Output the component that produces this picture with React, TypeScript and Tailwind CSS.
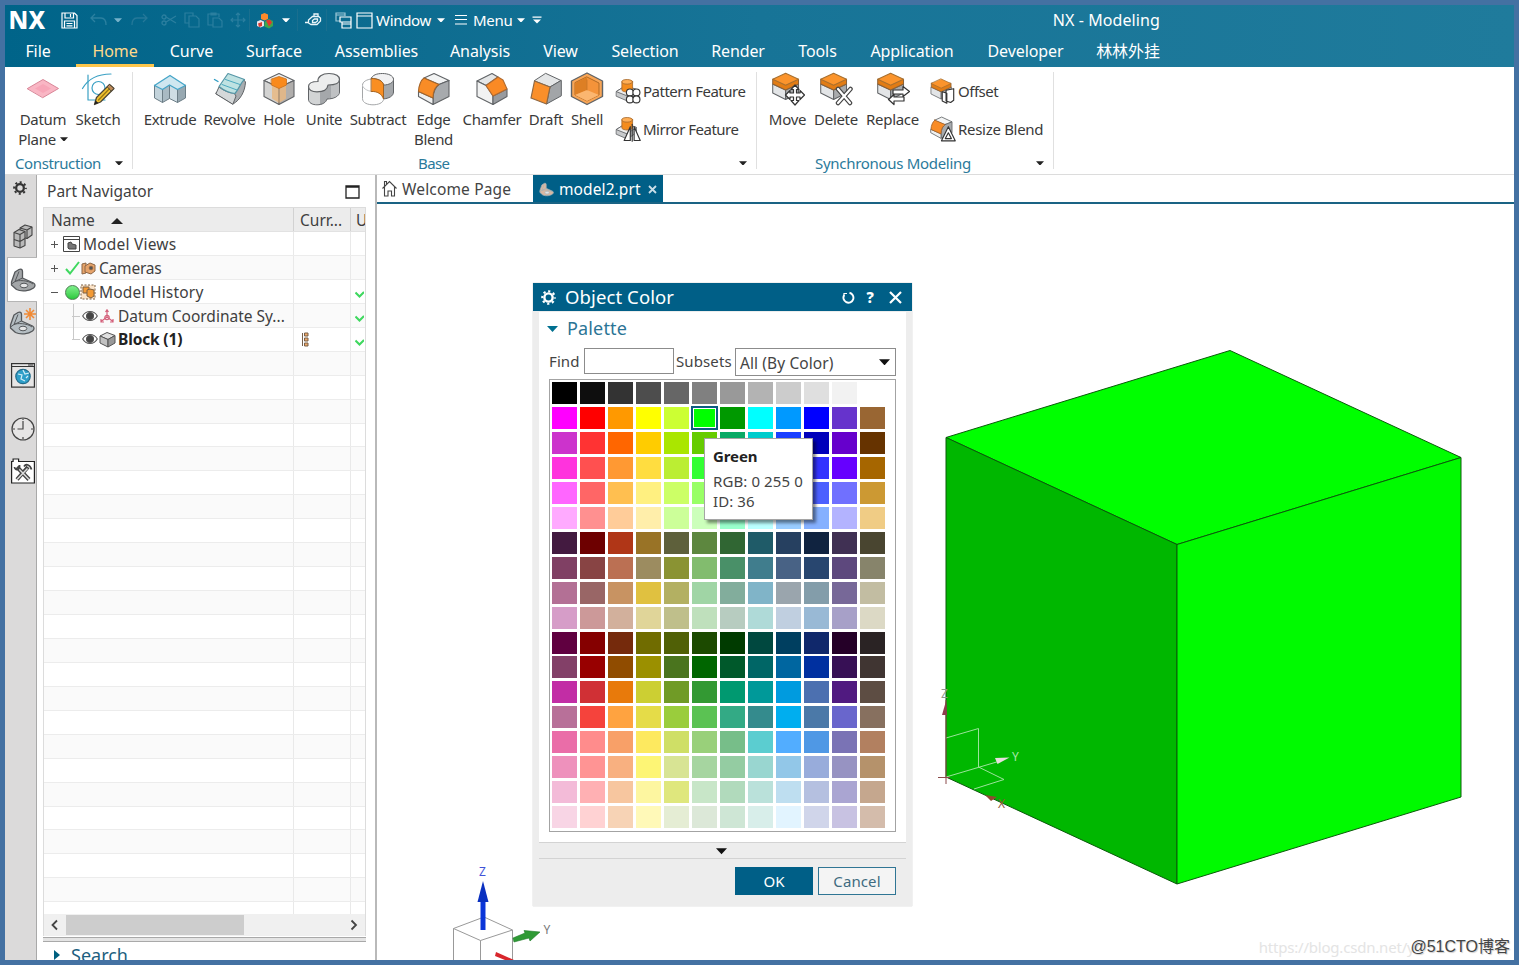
import React from "react";

type Kids = { children?: React.ReactNode };

const palette: string[][] = [
  ["#000000", "#0e0e0e", "#333333", "#4d4d4d", "#666666", "#808080", "#999999", "#b3b3b3", "#cccccc", "#dfdfdf", "#f2f2f2", "#ffffff"],
  ["#ff00ff", "#ff0000", "#ff9900", "#ffff00", "#ccff33", "#00ff00", "#009900", "#00ffff", "#0099ff", "#0000ff", "#6633cc", "#996633"],
  ["#cc33cc", "#ff3333", "#ff6600", "#ffcc00", "#aae600", "#66cc00", "#0aaa66", "#00cccc", "#1a40ff", "#0000bb", "#6600cc", "#663300"],
  ["#ff33dd", "#ff5050", "#ff9933", "#ffdd40", "#bbee33", "#33ff33", "#33cc88", "#33dddd", "#3366ff", "#3333ff", "#6600ff", "#a66600"],
  ["#ff66ff", "#ff6666", "#ffbf50", "#fff080", "#ccff66", "#99ff66", "#66ddaa", "#66ffee", "#6699ff", "#4c60ff", "#7070ff", "#cc9933"],
  ["#ffaaff", "#ff9090", "#ffcc99", "#ffeeaa", "#ccff99", "#ccffbb", "#99ffcc", "#bbffff", "#99ccff", "#85b0ff", "#b3b3ff", "#f0cc85"],
  ["#431a40", "#6d0000", "#b03617", "#997326", "#5e603b", "#5d873f", "#306633", "#1f5b68", "#264060", "#102340", "#403053", "#494530"],
  ["#804064", "#884444", "#bb7053", "#9c8c60", "#8a9333", "#82bc6e", "#499068", "#407d8d", "#486285", "#28466f", "#5d487d", "#87846b"],
  ["#b37095", "#996666", "#c89362", "#e0c140", "#b3b062", "#a0d5a5", "#82ad9c", "#80b4c8", "#9aa5ad", "#839daa", "#776898", "#c2bda2"],
  ["#d69dc8", "#cc9999", "#d2b09c", "#e0d599", "#bfbf8b", "#bfe0bc", "#b7ccc0", "#afdad8", "#c0cfe0", "#99b9d5", "#a7a0c8", "#dcd9c5"],
  ["#600040", "#850000", "#752a0c", "#706c00", "#506006", "#1c4a00", "#003b00", "#00483f", "#003f60", "#10286b", "#250028", "#2a2324"],
  ["#834068", "#980000", "#904c00", "#9b9000", "#4a741e", "#006600", "#00592b", "#006666", "#0066a0", "#0030a0", "#371055", "#403532"],
  ["#c22da5", "#d03035", "#e87a0b", "#cccf33", "#709b26", "#339933", "#009970", "#009999", "#009bdf", "#4c70b0", "#501a80", "#5d4d43"],
  ["#b87099", "#f5433c", "#ffa340", "#e5dc48", "#9acd3c", "#5bc253", "#33aa85", "#348b8d", "#00aeef", "#4b79a8", "#6966cc", "#87705f"],
  ["#ea6da8", "#ff8c8c", "#f8a068", "#fde95f", "#cfdf66", "#99d07a", "#77be89", "#5bcdd0", "#52adff", "#4f98e5", "#7a73b5", "#b28060"],
  ["#ee91bc", "#ff9494", "#f8b080", "#fdf575", "#d8e494", "#a6d5a0", "#94cca2", "#99d6d0", "#92c7e8", "#98acdb", "#9793c2", "#b5926b"],
  ["#f3bbd8", "#ffb0b3", "#f7c69f", "#fdf6a0", "#dfe77d", "#c8e6c8", "#b1dabc", "#bae1da", "#bedef0", "#b5c0e0", "#aaa5d2", "#c5a78e"],
  ["#f8d5e5", "#ffd2d3", "#f7d3b5", "#fff9b8", "#e5edd4", "#dce8d8", "#cee6d5", "#d8eeea", "#e2f4ff", "#d0d5ea", "#c8c2e2", "#d4bcab"],
];

/* ---------- small building blocks ---------- */

function Caret({ className = "", size = 8 }: { className?: string; size?: number }) {
  return (
    <svg width={size} height={size * 0.6} viewBox="0 0 10 6" className={`shrink-0 ${className}`}>
      <path d="M0 .3h10L5 5.800z" fill="currentColor" />
    </svg>
  );
}

function Icon({ children, size = 34 }: Kids & { size?: number }) {
  return (
    <svg width={size} height={size} viewBox="0 0 34 34" className="shrink-0" strokeLinejoin="round" strokeLinecap="round">
      {children}
    </svg>
  );
}

const ink = "#606366";

function Box({ top = "#f0f1f2", left = "#d6d8da", right = "#989ba0" }: { top?: string; left?: string; right?: string }) {
  return (
    <g stroke={ink} strokeWidth="1.1">
      <path d="M17 1.500 32 8.500 17 15.500 2 8.500z" fill={top} />
      <path d="M2 8.500 17 15.500V32.500L2 24.500z" fill={left} />
      <path d="M32 8.500 17 15.500V32.500l15-8z" fill={right} />
    </g>
  );
}

const DatumIcon = () => (
  <Icon>
    <path d="M1.500 16.500 17 7.500l15.500 9L17 25.500z" fill="#f9b6c4" stroke="#d98698" />
    <path d="M9 16.500l8-4.500 8 4.500-8 4.500z" fill="#f7a6b8" stroke="none" />
  </Icon>
);
const SketchIcon = () => (
  <Icon>
    <g fill="none" stroke="#3ba1c4" strokeWidth="1.200">
      <path d="M7 3v25h17" />
      <path d="M1.500 16.500C7 7 16 2 30 2" />
      <circle cx="17.500" cy="16" r="6.500" />
    </g>
    <path d="M13.500 32.500 15.500 25.500 28.500 12.500 33 16.500 19.500 30z" fill="#f2c230" stroke="#4d4637" strokeWidth="1.300" />
    <path d="M17.500 28 30.500 14.500" stroke="#9a7812" strokeWidth="1.300" />
    <path d="M26.500 14.500 28.500 12.500 33 16.500 30.500 18.800z" fill="#bf8a5a" stroke="#4d4637" />
    <path d="M13.500 32.500 14.500 28.500 17.500 31z" fill="#222" />
  </Icon>
);
const ExtrudeIcon = () => (
  <Icon>
    <g stroke="#6d7e87" strokeWidth="1">
      <path d="M1.500 13.500V26L9.500 30.500V17.500z" fill="#c3d3db" />
      <path d="M9.500 17.500V30.500L16.500 26.500V13z" fill="#a9bac3" />
      <path d="M16.500 13V26.500L24.500 30.500V17.500z" fill="#cfdde4" />
      <path d="M24.500 17.500V30.500L32.500 26V13.500z" fill="#97a8b1" />
    </g>
    <path d="M1.500 13.500 17 3.500 32.500 13.500 24.500 17.500 16.500 13 9.500 17.500z" fill="#cfe7f0" stroke="#46a5c8" strokeWidth="1.300" />
  </Icon>
);
const RevolveIcon = () => (
  <Icon>
    <path d="M3 21.500 20 32C27 28 32 20 32.500 10L30 7 18 22z" fill="#a9adb0" stroke={ink} />
    <path d="M3 21.500 6 15C11 19 17 21 21 21L23 24 20 32z" fill="#d5d8d9" stroke={ink} />
    <path d="M6 14.500 15 1.500 31.500 7.500C28 10 26 17 22 21.500 16 21 11 18.500 6 14.500z" fill="#bfe2e2" stroke="#5596a6" strokeWidth="1.200" />
    <path d="M12.500 7.500 27 12.500M9 12.500l15 5.500" stroke="#4ba9bf" />
    <path d="M1.500 7.500 5 9.500" stroke="#2f9cc4" strokeWidth="1.400" />
  </Icon>
);
const HoleIcon = () => (
  <Icon>
    <Box left="#d3d3d2" right="#b0aeac" />
    <path d="M10 13V26.500L17 31l7-4.500V13z" fill="#e8b884" opacity=".85" />
    <path d="M17 15.500V32.500" stroke="#8a7b6c" strokeWidth=".8" />
    <path d="M9.500 7 17 4.500 24.500 7V13L17 16.500 9.500 13z" fill="#f98a1c" stroke="#c9701c" strokeWidth=".8" />
  </Icon>
);
const UniteIcon = () => (
  <Icon>
    <path d="M1.500 15V27C1.500 31 5.500 32.800 10 32.800 15.500 32.800 19 30.500 20 27 27 27 32.500 24 32.500 20V7z" fill="#a5a8ab" stroke={ink} />
    <path d="M2 16V27C2 30.500 6 32.300 10 32.300L13 32V18z" fill="#d2d4d5" />
    <path d="M24 12V26C28 25.500 32 23.500 32 20V8z" fill="#bfc1c3" />
    <path d="M1.500 14.500C1.500 11 6 9.500 11 9.500 10.500 5 15 1.500 22 1.500S32.500 4 32.500 7.500 28 13 21 13C20.500 17.500 16 19.800 10 19.800 5 19.800 1.500 18 1.500 14.500z" fill="#eceded" stroke={ink} strokeWidth="1.200" />
  </Icon>
);
const SubtractIcon = () => (
  <Icon>
    <path d="M10.500 6V20L22 27C28 26.500 32.500 24 32.500 20V7z" fill="#a4a7aa" stroke={ink} />
    <path d="M10.500 6.500C11 3 16 1.500 21.500 1.500S32.500 3.500 32.500 7.500C32.500 10.500 28 13 22.500 13 22 9 17 6.500 10.500 6.500z" fill="#f1f1f2" stroke={ink} />
    <path d="M1.500 13C1.500 9.500 6 7.500 10.500 7L22.500 20V27.500C22 31 17 32.800 12 32.800S1.500 31 1.500 27z" fill="#ffffff" stroke="#a5a7a9" />
    <path d="M1.500 13.500C2.500 17.500 8 19.500 12 19.500" fill="none" stroke="#c3c5c7" />
    <path d="M10.500 6.500C17 6.500 22 9 22.500 13V27C21 22 16 19 10.500 19.500z" fill="#f98e22" stroke="#a26220" />
  </Icon>
);
const BlendShape = () => (
  <>
    <path d="M7 6 17 1.500 32 8.500 22 12.500z" fill="#f3f4f4" />
    <path d="M22 12.500 32 8.500V24.500L16 32.500V26C16.500 19 18.500 15 22 12.500z" fill="#a7aaad" />
    <path d="M1.500 19.500 16 26V32.500L1.500 24.500z" fill="#eff0f0" />
    <path d="M7 6 22 12.500C18.500 14.500 16 19 16 26L1.500 19.500C1.500 14 4 8 7 6z" fill="#f98c26" stroke="#a3642a" />
  </>
);
const EdgeIcon = () => (
  <Icon>
    <g stroke={ink} strokeWidth="1.100"><BlendShape /></g>
  </Icon>
);
const ChamferIcon = () => (
  <Icon>
    <g stroke={ink} strokeWidth="1.100">
      <path d="M2 9 17 1.500 23 5 11 13.500z" fill="#e4e6e7" />
      <path d="M2 9 11 13.500 18 24V32.500L2 24.500z" fill="#f1f2f2" />
      <path d="M18 24 32 17V24.500L18 32.500z" fill="#989b9f" />
      <path d="M23 5 28 8 32 17 18 24 11 13.500z" fill="#fa8a25" stroke="#b06a30" />
    </g>
  </Icon>
);
const DraftIcon = () => (
  <Icon>
    <path d="M17 1.500 32 8.500 21 15 5.500 9z" fill="#e4e6e7" stroke={ink} />
    <path d="M32 8.500 21 15 17.500 32 32 24z" fill="#a2a5a8" stroke={ink} />
    <path d="M5.500 9 21 15 17.500 32 2 26z" fill="#fa8f2a" stroke="#8e6844" strokeWidth="1.200" />
  </Icon>
);
const ShellIcon = () => (
  <Icon>
    <path d="M17 1 32.500 9V24.500L17 32.500 1.500 24.500V9z" fill="#f8a556" stroke={ink} strokeWidth="1.400" />
    <path d="M17 5 29 11V23L17 29 5 23V11z" fill="#f4933a" stroke="#b16a25" />
    <path d="M17 5V18L5 23V11z" fill="#dd7f24" />
    <path d="M17 18 29 23 17 29 5 23z" fill="#fbb670" />
    <path d="M17 18V8" stroke="#c8762a" strokeWidth=".8" />
  </Icon>
);
const SyncBox = () => (
  <g transform="scale(.86)" stroke={ink} strokeWidth="1.200">
    <path d="M2 14 17 21V32L2 24.500z" fill="#e3e5e7" />
    <path d="M32 14 17 21V32l15-7.500z" fill="#a9abad" />
    <path d="M2 8.500V14L17 21 32 14V8.500z" fill="#e27c14" stroke="#8c6238" />
    <path d="M17 1.500 32 8.500 17 15.500 2 8.500z" fill="#fb942c" stroke="#a8702f" />
  </g>
);
const MoveIcon = () => (
  <Icon>
    <SyncBox />
    <path d="M24 13l4 4.500h-2.500v3.500h3.500V18.500l4.500 4.500-4.500 4.500V25h-3.500v3.500H28L24 33l-4-4.500h2.500V25H19v2.500L14.500 23l4.500-4.500V21h3.500v-3.500H20z" fill="#fff" stroke="#333" strokeWidth="1.200" />
  </Icon>
);
const DeleteIcon = () => (
  <Icon>
    <SyncBox />
    <path d="M19 17 31 31M31.500 17 19 31" stroke="#444" strokeWidth="4.500" />
    <path d="M19 17 31 31M31.500 17 19 31" stroke="#fff" strokeWidth="2.200" />
  </Icon>
);
const ReplaceIcon = () => (
  <Icon>
    <SyncBox />
    <path d="M17 18h10v-3.500l6.500 5-6.500 5V22H17zM28 25H18v-2.500L12.500 27.500l5.500 5V29h10z" fill="#fff" stroke="#333" strokeWidth="1.200" />
  </Icon>
);
const Boss = () => (
  <g stroke={ink} strokeWidth="1.100">
    <path d="M2 17.500 14 10l14 5v7L16 30 2 24z" fill="#c8cacc" />
    <path d="M2 17.500 14 10l14 5-12 8z" fill="#ececec" />
    <path d="M9 5V16c2 3 12 3 14 0V5z" fill="#f48c1d" stroke="#a86a2c" />
    <ellipse cx="16" cy="5" rx="7" ry="3" fill="#ffae55" stroke="#a86a2c" />
  </g>
);
const PatternIcon = () => (
  <Icon size={26}>
    <Boss />
    <g fill="#fff" stroke="#333" strokeWidth="1.500">
      <circle cx="19.500" cy="19" r="4.600" /><circle cx="28" cy="19" r="4.600" />
      <circle cx="19.500" cy="28" r="4.600" /><circle cx="28" cy="28" r="4.600" />
    </g>
  </Icon>
);
const MirrorIcon = () => (
  <Icon size={26}>
    <Boss />
    <path d="M20 14V32H12zM25 14V32h8z" fill="#fff" stroke="#333" strokeWidth="1.500" />
    <path d="M22.500 11V33" stroke="#333" strokeWidth="1.500" />
  </Icon>
);
const OffsetIcon = () => (
  <Icon size={26}>
    <SyncBox />
    <path d="M16 18v12l6 3V20zM21 16l10-2v15l-4 3-6-2z" fill="#fff" stroke="#333" strokeWidth="1.500" />
  </Icon>
);
const ResizeIcon = () => (
  <Icon size={26}>
    <g transform="scale(.9)" stroke={ink} strokeWidth="1.200"><BlendShape /></g>
    <path d="M24 14 33 32.500H15zM24 22l4 7.500h-8z" fill="#fff" stroke="#333" strokeWidth="1.500" />
  </Icon>
);

function Part({ size = 26, fill = "#a3a6a8", line = "#55585b" }: { size?: number; fill?: string; line?: string }) {
  return (
    <svg width={size} height={size} viewBox="0 0 26 26" className="shrink-0" strokeLinejoin="round">
      <path d="M1.500 15 5 5 9 2.500c2-1 3.500 0 3.500 2V11l11 5c2 1 2 3 0 5-4 3-12 4-17 1.500L1.500 18z" fill={fill} stroke={line} strokeWidth="1.300" />
      <path d="M5 14.500 9 4.500M12.500 11 5 14.500 1.500 17M5 14.500C8 13 18 13 23 17" fill="none" stroke={line} />
      <ellipse cx="14" cy="18.500" rx="3.800" ry="2.300" fill="#e4e5e6" stroke={line} />
    </svg>
  );
}

function Gear({ className = "", size = 14 }: { className?: string; size?: number }) {
  return (
    <svg width={size} height={size} viewBox="0 0 16 16" className={`shrink-0 ${className}`} fill="none" stroke="currentColor">
      <circle cx="8" cy="8" r="4.400" strokeWidth="2.600" />
      <circle cx="8" cy="8" r="6.700" strokeWidth="2.200" strokeDasharray="2.400 2.860" strokeDashoffset="1.200" />
    </svg>
  );
}

/* ---------- header ---------- */

const Cell = ({ w, children }: Kids & { w: string }) => <div className={`flex h-full shrink-0 items-center justify-center ${w}`}>{children}</div>;

function QuickBar() {
  return (
    <div className="flex h-[30px] items-center text-[15px] text-white">
      <Cell w="w-[44px]"><span className="text-[24px] font-extrabold tracking-[0.4px]">NX</span></Cell>
      <Cell w="w-[40px]">
        <svg width="17" height="17" viewBox="0 0 17 17" fill="none" stroke="#fff" strokeWidth="1.200">
          <path d="M1 1h12.500L16 3.500V16H1zM4 1v5h8.500V1M9.500 2v3M3.500 16V9h10v7M5.500 11.500h6M5.500 13.800h6" />
        </svg>
      </Cell>
      <Cell w="w-[19px]"><svg width="17" height="14" viewBox="0 0 17 14" fill="none" stroke="#2b80a0" strokeWidth="1.300"><path d="M5 1 1 5l4 4M1 5h10c4 0 5 3 5 7" /></svg></Cell>
      <Cell w="w-[20px]"><Caret className="text-[#76b2ca]" /></Cell>
      <Cell w="w-[22px]"><svg width="17" height="14" viewBox="0 0 17 14" fill="none" stroke="#247899" strokeWidth="1.300"><path d="M12 1l4 4-4 4M16 5H6C2 5 1 8 1 12" /></svg></Cell>
      <div className="ml-[7px] flex h-full">
        <Cell w="w-[23px]"><svg width="16" height="14" viewBox="0 0 16 14" fill="none" stroke="#2b7f9f" strokeWidth="1.300"><path d="M15 3 5 9M15 10 5 4" /><circle cx="3" cy="4" r="2" /><circle cx="3" cy="10" r="2" /></svg></Cell>
        <Cell w="w-[23px]"><svg width="16" height="16" viewBox="0 0 16 16" fill="none" stroke="#2b7f9f" strokeWidth="1.200"><path d="M5 11H1V1h8v3M5 4h7l3 3v8H5z" /></svg></Cell>
        <Cell w="w-[23px]"><svg width="16" height="16" viewBox="0 0 16 16" fill="none" stroke="#2b7f9f" strokeWidth="1.200"><path d="M6 13H1V2h11v3M4 1h5v2H4zM6 6h6l3 3v6H6z" /></svg></Cell>
        <Cell w="w-[23px]"><svg width="16" height="16" viewBox="0 0 16 16" fill="none" stroke="#2b7f9f" strokeWidth="1.200"><path d="M8 1v14M1 8h14M6 3l2-2 2 2M6 13l2 2 2-2M3 6 1 8l2 2M13 6l2 2-2 2" /></svg></Cell>
      </div>
      <div className="mr-[4px] h-[22px] w-px bg-[#1a6f8f]" />
      <Cell w="w-[22px]">
        <svg width="18" height="17" viewBox="0 0 18 17">
          <path d="M5 2.500 8.500 1 12 2.500V7L8.500 8.500 5 7z" fill="#ff8a2a" />
          <path d="M1 9.500 4.500 8 8 9.500V14L4.500 15.500 1 14z" fill="#e9e3ea" />
          <path d="M2 11.500 6 10v4l-3 1z" fill="#d83a32" />
          <path d="M8.500 10 12.500 7 17 9v5l-4 2.500-4.500-2z" fill="#3fa64d" />
          <path d="M10 8.500l4-1 2 3-3 4z" fill="#e2382e" />
        </svg>
      </Cell>
      <Cell w="w-[19px]"><Caret /></Cell>
      <div className="mx-[2px] h-[22px] w-px bg-[#1a6f8f]" />
      <Cell w="w-[25px]">
        <svg width="18" height="14" viewBox="0 0 18 14" fill="none" stroke="#e9f5f9" strokeWidth="1.300">
          <path d="M1 9.500h3.500M4.500 7l4-3.500h6l2 1.500v3l-3.500 3.500H7L4.500 10zM8.500 7.500l2-1.500h3v2l-2 1.500h-3zM10 3.500V1h4v2.500" />
        </svg>
      </Cell>
      <div className="ml-px mr-[6px] h-[22px] w-px bg-[#1a6f8f]" />
      <Cell w="w-[20px]">
        <svg width="17" height="17" viewBox="0 0 17 17" fill="none" stroke="#fff" strokeWidth="1.200">
          <path d="M5 9H1V1h9v3M1 3h9" stroke="#9cc8d8" /><path d="M5 5h11v5H5zM7 10v6h9v-6M7 12h9" />
        </svg>
      </Cell>
      <Cell w="w-[23px]">
        <svg width="17" height="17" viewBox="0 0 17 17" fill="none" stroke="#fff" strokeWidth="1.200"><path d="M1 1h15v15H1zM1 4h15" /></svg>
      </Cell>
      <span className="w-[61px] tracking-[-0.3px]">Window</span>
      <Caret />
      <svg width="12" height="12" viewBox="0 0 12 12" className="ml-[10px] mr-[6px]" stroke="#fff" strokeWidth="1.200"><path d="M0 1.500h12M0 5.500h12M0 10h12" /></svg>
      <span className="w-[44px] tracking-[-0.3px]">Menu</span>
      <Caret />
      <svg width="10" height="8" viewBox="0 0 10 8" className="ml-[7px]" fill="#fff"><path d="M.5.500h9v1.300h-9zM1 3.500h8L5 7.500z" /></svg>
      <span className="ml-auto mr-[354px] text-[16px] tracking-[0.1px]">NX - Modeling</span>
    </div>
  );
}

function MenuTabs() {
  const tab = "flex h-full shrink-0 items-center justify-center";
  return (
    <div className="flex h-[32px] text-[16px] tracking-[-0.1px] text-white">
      <div className={`${tab} mr-[5px] w-[66px]`}>File</div>
      <div className={`${tab} w-[78px] border-b-[3px] border-[#fdc64b] pt-[3px] text-[#ffd98a]`}>Home</div>
      <div className={`${tab} w-[75px]`}>Curve</div>
      <div className={`${tab} w-[90px]`}>Surface</div>
      <div className={`${tab} w-[115px]`}>Assemblies</div>
      <div className={`${tab} w-[92px]`}>Analysis</div>
      <div className={`${tab} w-[69px]`}>View</div>
      <div className={`${tab} w-[100px]`}>Selection</div>
      <div className={`${tab} w-[86px]`}>Render</div>
      <div className={`${tab} w-[73px]`}>Tools</div>
      <div className={`${tab} w-[116px]`}>Application</div>
      <div className={`${tab} w-[111px]`}>Developer</div>
      <div className={`${tab} w-[94px]`}>林林外挂</div>
    </div>
  );
}

/* ---------- ribbon ---------- */

function Tool({ w, icon, children }: Kids & { w: string; icon: React.ReactNode }) {
  return (
    <div className={`flex shrink-0 flex-col items-center ${w}`}>
      {icon}
      <div className="mt-[3px] whitespace-nowrap text-center leading-[20px]">{children}</div>
    </div>
  );
}

const Side = ({ icon, children }: Kids & { icon: React.ReactNode }) => (
  <div className="flex h-[38px] items-center gap-[2px] whitespace-nowrap tracking-[-0.5px]">{icon}{children}</div>
);

function Group({ w, title, titleClass, children }: Kids & { w: string; title: string; titleClass: string }) {
  return (
    <div className={`flex shrink-0 flex-col ${w}`}>
      <div className="flex h-[81px]">{children}</div>
      <div className="flex h-[20px] items-center text-[#2b7a9b]">
        <span className={titleClass}>{title}</span>
        <Caret className="ml-auto mr-[9px] text-[#222]" />
      </div>
    </div>
  );
}

function Ribbon() {
  return (
    <div className="flex h-[108px] border-b border-[#dcdcdc] bg-white pt-[5px] text-[15px] tracking-[-0.3px] text-[#3a3a3a]">
      <Group w="w-[127px]" title="Construction" titleClass="ml-[10px] tracking-[-0.4px]">
        <div className="w-[10px]" />
        <Tool w="w-[56px]" icon={<DatumIcon />}>Datum<br /><span className="inline-flex items-center gap-[4px]">Plane <Caret className="text-[#222]" /></span></Tool>
        <Tool w="w-[54px]" icon={<SketchIcon />}>Sketch</Tool>
      </Group>
      <div className="h-[97px] w-px bg-[#e0e0e0]" />
      <Group w="w-[623px]" title="Base" titleClass="ml-[285px] tracking-[-0.6px]">
        <div className="w-[8px]" />
        <Tool w="w-[58px]" icon={<ExtrudeIcon />}>Extrude</Tool>
        <Tool w="w-[61px]" icon={<RevolveIcon />}>Revolve</Tool>
        <Tool w="w-[38px]" icon={<HoleIcon />}>Hole</Tool>
        <Tool w="w-[52px]" icon={<UniteIcon />}>Unite</Tool>
        <Tool w="w-[56px]" icon={<SubtractIcon />}>Subtract</Tool>
        <Tool w="w-[55px]" icon={<EdgeIcon />}>Edge<br />Blend</Tool>
        <Tool w="w-[62px]" icon={<ChamferIcon />}>Chamfer</Tool>
        <Tool w="w-[46px]" icon={<DraftIcon />}>Draft</Tool>
        <Tool w="w-[36px]" icon={<ShellIcon />}>Shell</Tool>
        <div className="ml-[10px]">
          <Side icon={<PatternIcon />}>Pattern Feature</Side>
          <Side icon={<MirrorIcon />}>Mirror Feature</Side>
        </div>
      </Group>
      <div className="h-[97px] w-px bg-[#e0e0e0]" />
      <Group w="w-[296px]" title="Synchronous Modeling" titleClass="ml-[58px]">
        <div className="w-[7px]" />
        <Tool w="w-[47px]" icon={<MoveIcon />}>Move</Tool>
        <Tool w="w-[50px]" icon={<DeleteIcon />}>Delete</Tool>
        <Tool w="w-[63px]" icon={<ReplaceIcon />}>Replace</Tool>
        <div className="ml-[6px]">
          <Side icon={<OffsetIcon />}>Offset</Side>
          <Side icon={<ResizeIcon />}><span className="tracking-[-0.3px]">Resize Blend</span></Side>
        </div>
      </Group>
      <div className="h-[97px] w-px bg-[#e0e0e0]" />
    </div>
  );
}

/* ---------- left resource bar ---------- */

function ResourceBar() {
  return (
    <div className="flex w-[32px] shrink-0 flex-col items-center border-r border-[#a9a9a9] bg-[#dbdada] pl-[2px]">
      <div className="flex h-[40px] w-full items-start justify-center pr-[4px] pt-[6px] text-[#333]"><Gear /></div>
      <div className="flex h-[42px] items-center pl-[2px]">
        <svg width="22" height="26" viewBox="0 0 22 26" fill="#b9b9b9" stroke="#444" strokeWidth="1.100" strokeLinejoin="round">
          <path d="M8 5 13 2l7 2v8l-5 3.500-7-2z" /><path d="M8 5 15 7V15.500M15 7 20 4" fill="none" />
          <path d="M2 9.500 7 6.500l6 2v14L8 25l-6-2z" /><path d="M2 9.500 8 11.500V25M8 11.500 13 8.500M2 16.500 8 18.500 13 15.500" fill="none" />
        </svg>
      </div>
      <div className="-mr-px flex h-[45px] w-[31px] items-center justify-center border-y border-l border-[#b5b5b5] bg-white"><Part /></div>
      <div className="relative mt-[7px] flex h-[28px] items-center">
        <Part fill="#b5bec3" />
        <svg width="12" height="12" viewBox="0 0 12 12" className="absolute -right-[1px] -top-[1px]" stroke="#f18a35" strokeWidth="1.600"><path d="M6 0v12M0 6h12M2 2l8 8M10 2l-8 8" /></svg>
      </div>
      <svg width="24" height="25" viewBox="0 0 24 25" className="ml-[2px] mt-[26px]" fill="none" stroke="#333" strokeWidth="1.200">
        <rect x=".6" y=".6" width="22.800" height="23.500" fill="#e7e6e6" /><path d="M.6 3.500h22.800M17 2h5" /><circle cx="12" cy="13.500" r="7.200" fill="#2e9fc9" stroke="#226b8b" /><path d="M7 11l4 1-1 4 4 2M12 7l2 4 4-1M15 15l2-2" stroke="#d2eef8" />
      </svg>
      <svg width="24" height="24" viewBox="0 0 24 24" className="ml-[2px] mt-[29px]" fill="none" stroke="#444" strokeWidth="1.200">
        <circle cx="12" cy="12" r="11" fill="#e6e5e5" /><path d="M12 4v8H6.500M12 20v2.500M1.500 12H4M20 12h2.500M12 1.500V3" />
      </svg>
      <svg width="24" height="26" viewBox="0 0 24 26" className="ml-[2px] mt-[17px]" fill="#fff" stroke="#222" strokeWidth="1.200">
        <path d="M.6 25V3.500h1.500V1h5.500v2.500h15.800V25z" />
        <path d="M6 9l12 12.500M17 9 6 21.500" stroke="#444" strokeWidth="4" /><path d="M7 10l11 11.500M16.500 10.500 6 21.500" stroke="#ddd" strokeWidth="1.500" />
        <path d="M3.500 9c.5 4 5.500 3 5-2M13 8.500c2-3 6-2 7.500 3" fill="none" stroke="#444" strokeWidth="1.800" />
      </svg>
    </div>
  );
}

/* ---------- part navigator ---------- */

const Check = () => (
  <svg width="9" height="8" viewBox="0 0 9 8" fill="none" stroke="#3fd85f" strokeWidth="2"><path d="M.5 2.500 4.500 6.500 9 2" /></svg>
);

const Eye = () => (
  <svg width="16" height="12" viewBox="0 0 16 12" className="shrink-0" fill="#fff" stroke="#555" strokeWidth="1.100">
    <path d="M.7 6C4 0 12 0 15.300 6 12 12 4 12 .7 6z" /><circle cx="8" cy="6" r="3.500" fill="#444" />
  </svg>
);

const Toggle = ({ open }: { open?: boolean }) => (
  <svg width="9" height="9" viewBox="0 0 9 9" className="shrink-0" stroke="#555"><path d={open ? "M1 4.500h7" : "M1 4.500h7M4.500 1v7"} /></svg>
);

function Row({ name, mid, last, shade }: { name?: React.ReactNode; mid?: React.ReactNode; last?: boolean; shade: boolean }) {
  return (
    <div className={`flex h-[23.950px] shrink-0 border-b border-[#ececec] ${shade ? "bg-[#fafafa]" : "bg-white"}`}>
      <div className="flex w-[250px] shrink-0 items-center whitespace-nowrap border-r border-[#e9e9e9]">{name}</div>
      <div className="flex w-[57px] shrink-0 items-center border-r border-[#e9e9e9] pl-[7px]">{mid}</div>
      <div className="flex items-end pb-[5px] pl-[4px]">{last && <Check />}</div>
    </div>
  );
}

function Navigator() {
  const rows: { name?: React.ReactNode; mid?: React.ReactNode; last?: boolean }[] = [
    {
      name: (
        <div className="flex items-center pl-[6px] pt-[2px]">
          <Toggle />
          <svg width="17" height="16" viewBox="0 0 17 16" className="ml-[4px] mr-[3px]" fill="#fff" stroke="#444"><path d="M.5.500h16v15H.5zM.5 3.500h16" /><path d="M5 12V7l3-1 1 2 4 1v4H6z" fill="#777" /></svg>
          <span className="tracking-[0.2px]">Model Views</span>
        </div>
      ),
    },
    {
      name: (
        <div className="flex items-center pl-[6px] pt-[2px]">
          <Toggle />
          <svg width="15" height="14" viewBox="0 0 15 14" className="ml-[6px]" fill="none" stroke="#3fd85f" strokeWidth="2"><path d="M1 8l4 4.500L14 1" /></svg>
          <svg width="15" height="15" viewBox="0 0 15 15" className="ml-[1px] mr-[3px]" fill="#e6a36a" stroke="#8c6646"><path d="M1 3 5 2v10l-4 1z" /><path d="M4 5l5-3 5 2v6l-4 3-6-2z" /><circle cx="10" cy="7" r="1.800" fill="#555" /></svg>
          <span className="tracking-[-0.2px]">Cameras</span>
        </div>
      ),
    },
    {
      last: true,
      name: (
        <div className="flex items-center pl-[6px] pt-[2px]">
          <Toggle open />
          <span className="ml-[6px] h-[15px] w-[15px] rounded-full border border-[#4d7d52] bg-linear-to-b from-[#7df08b] to-[#26c93c]" />
          <svg width="16" height="16" viewBox="0 0 16 16" className="mr-[3px]" fill="#f39a35" stroke="#7b6046"><path d="M1 1h14v14H1z" fill="#fbe3c8" strokeDasharray="2 1.500" /><path d="M3 3h6v6H3z" /><path d="M7 6l3-1 4 1v6l-3 2-4-2z" /></svg>
          <span className="tracking-[0.2px]">Model History</span>
        </div>
      ),
    },
    {
      last: true,
      name: (
        <div className="flex items-center pl-[28px] pt-[2px]">
          <span className="mr-[2px] h-px w-[8px] bg-[#c9c9c9]" />
          <Eye />
          <svg width="14" height="14" viewBox="0 0 14 14" className="ml-[2px] mr-[4px]" fill="none" stroke="#d4627c" strokeWidth="1.200"><path d="M7 8V1M7 8l-6 4.500M7 8l6 4.500M5.500 3 7 .8 8.500 3M1 10v3h3M10 13h3v-3" /><circle cx="7" cy="8.500" r="2.200" /></svg>
          Datum Coordinate Sy...
        </div>
      ),
    },
    {
      last: true,
      mid: (
        <svg width="10" height="15" viewBox="0 0 10 15" fill="#fff" stroke="#77604a"><path d="M1.500 1v13" /><path d="M3.500 1h3.500v3H3.500zM3.500 6h3.500v3H3.500zM3.500 11h3.500v3H3.500z" fill="#f0a868" /></svg>
      ),
      name: (
        <div className="flex items-center pl-[28px] font-bold tracking-[-0.150px] text-[#222]">
          <span className="mr-[2px] h-px w-[8px] bg-[#c9c9c9]" />
          <Eye />
          <svg width="17" height="17" viewBox="0 0 17 17" className="ml-[1px] mr-[2px]" stroke="#555" strokeLinejoin="round"><path d="M1 5 8 1.500 16 4.500 9 8.500z" fill="#e0e0e0" /><path d="M1 5l8 3.500V16L1 12z" fill="#c2c2c2" /><path d="M16 4.500 9 8.500V16l7-4z" fill="#999" /></svg>
          Block (1)
        </div>
      ),
    },
  ];
  while (rows.length < 29) rows.push({});

  return (
    <div className="flex w-[340px] shrink-0 flex-col border-r-2 border-[#b9b9b9] bg-white pl-[6px] pr-[9px] text-[15.500px] text-[#3f3f3f]">
      <div className="flex h-[32px] shrink-0 items-center pl-[4px] pt-[2px]">
        Part Navigator
        <svg width="15" height="14" viewBox="0 0 15 14" className="ml-auto mr-[6px]" fill="none" stroke="#222"><path d="M1 1h13v12H1zM1 2h13" strokeWidth="1.300" /></svg>
      </div>
      <div className="flex h-[707px] shrink-0 flex-col overflow-hidden border-x border-t border-[#dcdcdc]">
        <div className="flex h-[24px] shrink-0 border-b border-[#e2e2e2] bg-[#ececec]">
          <div className="flex w-[250px] shrink-0 items-center border-r border-[#d2d2d2] pl-[7px] pt-[2px]">
            Name
            <svg width="12" height="6" viewBox="0 0 12 6" className="ml-[16px]"><path d="M0 6h12L6 0z" fill="#222" /></svg>
          </div>
          <div className="flex w-[57px] shrink-0 items-center border-r border-[#d2d2d2] pl-[6px] pt-[2px]">Curr...</div>
          <div className="flex items-center pl-[5px] pt-[2px]">U</div>
        </div>
        <div className="relative flex h-[682px] flex-col overflow-hidden">
          {rows.map((r, i) => <Row key={i} {...r} shade={i % 2 === 1} />)}
          <div className="absolute left-[29px] top-[72px] h-[36px] w-px bg-[#c9c9c9]" />
        </div>
      </div>
      <div className="flex h-[22px] shrink-0 items-center border-x border-[#dcdcdc] bg-[#f0f0f0]">
        <svg width="22" height="12" viewBox="0 0 22 12" fill="none" stroke="#444" strokeWidth="1.800"><path d="M13 1.500 8.500 6l4.500 4.500" /></svg>
        <div className="h-[20px] w-[178px] bg-[#cdcdcd]" />
        <svg width="22" height="12" viewBox="0 0 22 12" className="ml-auto" fill="none" stroke="#444" strokeWidth="1.800"><path d="M8.500 1.500 13 6l-4.500 4.500" /></svg>
      </div>
      <div className="mt-px h-[5px] shrink-0 border-y border-[#a9a9a9] bg-[#e4e4e4]" />
      <div className="flex h-[26px] shrink-0 items-center gap-[11px] pl-[11px] text-[18px] leading-[26px] text-[#1d5f80]">
        <svg width="6" height="10" viewBox="0 0 6 10"><path d="M0 0v10l6-5z" fill="#00607f" /></svg>
        Search
      </div>
    </div>
  );
}

/* ---------- dialog ---------- */

function ObjectColor() {
  return (
    <div className="absolute left-[156px] top-[79px] flex h-[623px] w-[379px] flex-col bg-[#ededed] text-[15px] tracking-[0.1px] text-[#444] shadow-[0_0_1px_#aaa]">
      <div className="flex h-[28px] shrink-0 items-center bg-[#005f87] pl-[8px] text-white">
        <Gear size={15} />
        <span className="-mt-px ml-[9px] text-[18.500px] tracking-[0.1px]">Object Color</span>
        <svg width="13" height="13" viewBox="0 0 13 13" className="ml-auto" fill="none" stroke="#fff" strokeWidth="1.900"><path d="M2.200 4A5 5 0 1 0 7.500 1.800" /><path d="M5 2.500H2V5.500" strokeWidth="1.200" /></svg>
        <span className="ml-[12px] text-[15px] font-extrabold">?</span>
        <svg width="13" height="13" viewBox="0 0 13 13" className="ml-[15px] mr-[10px]" stroke="#fff" strokeWidth="2.200"><path d="M1 1l11 11M12 1 1 12" /></svg>
      </div>
      <div className="mx-[6px] mt-px flex h-[530px] shrink-0 flex-col bg-white">
        <div className="flex h-[34px] items-center pb-px pl-[8px] text-[18px] text-[#2b7495]">
          <svg width="11" height="6" viewBox="0 0 11 6" className="mr-[9px]"><path d="M0 0h11L5.500 6z" fill="#007090" /></svg>
          <span className="tracking-[0.150px]">Palette</span>
        </div>
        <div className="flex h-[33px] pl-[10px] pt-[2px]">
          <span className="w-[35px] pt-[2px]">Find</span>
          <span className="h-[26px] w-[90px] border border-[#8c8c8c] bg-white" />
          <span className="w-[61px] pl-[2px] pt-[2px]">Subsets</span>
          <span className="flex h-[28px] w-[161px] items-center justify-between border border-[#8c8c8c] pl-[4px] pr-[5px]"><span className="pt-[3px] text-[15.500px] tracking-[0.1px]">All (By Color)</span><Caret size={11} className="text-[#111]" /></span>
        </div>
        <div className="ml-[10px] flex h-[453px] w-[347px] flex-col gap-[2.960px] border border-[#a3a3a3] pl-[2px] pt-[2px]">
          {palette.map((row, r) => (
            <div key={r} className="flex h-[22px] shrink-0 gap-[3px]">
              {row.map((c, i) => (
                <div key={i} className={r === 1 && i === 5 ? "w-[25px] border-2 border-white outline-2 outline-[#0d5c80] -outline-offset-1" : "w-[25px]"} style={{ backgroundColor: c }} />
              ))}
            </div>
          ))}
        </div>
      </div>
      <div className="mx-[6px] flex h-[17px] shrink-0 items-center justify-center border-y border-[#d3d3d3] pr-[2px] pt-[2px]">
        <Caret size={11} className="text-[#111]" />
      </div>
      <div className="flex gap-[5px] pl-[202px] pt-[8px]">
        <div className="flex h-[28px] w-[78px] items-center justify-center bg-[#005f87] text-white">OK</div>
        <div className="flex h-[28px] w-[78px] items-center justify-center border border-[#2f7594] bg-[#f4f4f4] text-[#3f6b80]">Cancel</div>
      </div>
      <div className="absolute left-[171px] top-[155px] flex h-[82px] w-[109px] flex-col whitespace-nowrap border border-[#a5a5a5] bg-white pl-[8px] pt-[7px] text-[15px] leading-[20px] text-[#444] shadow-[3px_3px_3px_rgba(0,0,0,0.45)]">
        <b className="mb-[5px] tracking-[-0.1px] text-[#222]">Green</b>
        <span>RGB: 0 255 0</span>
        <span>ID: 36</span>
      </div>
    </div>
  );
}

/* ---------- viewport ---------- */

function Scene() {
  return (
    <svg width="1137" height="756" viewBox="377 204 1137 756" className="block" strokeLinejoin="round">
      <g stroke="#0a5a0a" strokeWidth="1">
        <path d="M1230 350.500 1461 457.500 1177 544.500 946 437.500z" fill="#00ff00" />
        <path d="M946 437.500 1177 544.500V884L946 777z" fill="#00b700" />
        <path d="M1177 544.500 1461 457.500V797L1177 884z" fill="#00fa00" />
      </g>
      <g fill="none" stroke="#9be39b">
        <path d="M946 738 978.500 728.500V767L1004 779.500 974 789M946 777l54-16" />
      </g>
      <path d="M995 758l14.500-.5-12 6.500z" fill="#e8dede" />
      <path d="M946 700v84M938 777.500h12" stroke="#8b4a4a" />
      <path d="M946 701 942 715h5z" fill="#8f3d4f" />
      <path d="M985 795l12 2-6 4z" fill="#8f4a30" />
      <g fontFamily="Noto Sans, sans-serif" fontSize="12">
        <text x="1012" y="761" fill="#a8e8a8">Y</text>
        <text x="998" y="808" fill="#8a5a3a">X</text>
        <text x="941" y="698" fill="#8c9a8c">Z</text>
      </g>

      <g fill="none" stroke="#999">
        <path d="M453.500 928.500 484 917 512.500 930 480.500 940.500zM453.500 928.500V960M480.500 940.500V960M512.500 930v30" />
      </g>
      <path d="M480.500 930V900h5v30z" fill="#0a35d8" />
      <path d="M483 881 477.500 902h11z" fill="#0a30c0" />
      <path d="M513 938l12-5-1-2.500L540 932l-10 9-1-3-15 4z" fill="#2f9a35" stroke="#1f7a28" strokeWidth=".6" />
      <path d="M496 952l18 8h-9l-10-4z" fill="#d8262c" />
      <g fontFamily="Noto Sans, sans-serif" fontSize="12">
        <text x="479" y="876" fill="#4052d8">Z</text>
        <text x="543.500" y="934" fill="#777">Y</text>
      </g>
    </svg>
  );
}

function Viewport() {
  return (
    <div className="flex min-w-0 flex-1 flex-col bg-white">
      <div className="flex h-[29px] shrink-0 border-b-2 border-[#1a6384] text-[15.500px] text-[#444]">
        <div className="flex w-[156px] items-center gap-[5px] pl-[5px] pt-[2px]">
          <svg width="15" height="17" viewBox="0 0 15 17" className="-mt-[2px]" fill="none" stroke="#444" strokeWidth="1.100"><path d="M.5 8.500 7.500 1.500l7 7M2.500 7v9H6v-5h3.500v5h3V7M2.500 6.500v-5H4.500V4" /></svg>
          <span className="tracking-[0.150px]">Welcome Page</span>
        </div>
        <div className="flex w-[130px] items-center bg-[#005f87] pl-[6px] pt-[2px] text-white">
          <Part size={15} fill="#d9b8a2" line="#9db0b8" />
          <span className="ml-[5px] tracking-[0.1px]">model2.prt</span>
          <svg width="9" height="9" viewBox="0 0 9 9" className="ml-[7px]" stroke="#c9dee8" strokeWidth="1.800"><path d="M1 1l7 7M8 1 1 8" /></svg>
        </div>
      </div>
      <div className="relative h-[756px]">
        <Scene />
        <ObjectColor />
        <div className="absolute bottom-[1px] right-[4px] flex items-center whitespace-nowrap leading-[24px]">
          <span className="-mr-[4px] text-[15px] tracking-[-0.2px] text-[#e4e4e4]">https://blog.csdn.net/y</span>
          <span className="font-['Liberation_Sans','Noto_Sans_CJK_SC',sans-serif] text-[16px] text-[#444] [text-shadow:1px_1px_1px_#ccc]">@51CTO博客</span>
        </div>
      </div>
    </div>
  );
}

export default function App() {
  return (
    <div className="flex h-[965px] w-[1519px] flex-col overflow-hidden bg-[#4471a2] p-[5px] font-['Noto_Sans','Noto_Sans_CJK_SC',sans-serif]">
      <div className="shrink-0 bg-linear-to-r from-[#006489] via-[#177497] to-[#1f7b9c]">
        <QuickBar />
        <MenuTabs />
      </div>
      <Ribbon />
      <div className="flex h-[785px] shrink-0 overflow-hidden bg-white">
        <ResourceBar />
        <Navigator />
        <Viewport />
      </div>
    </div>
  );
}
